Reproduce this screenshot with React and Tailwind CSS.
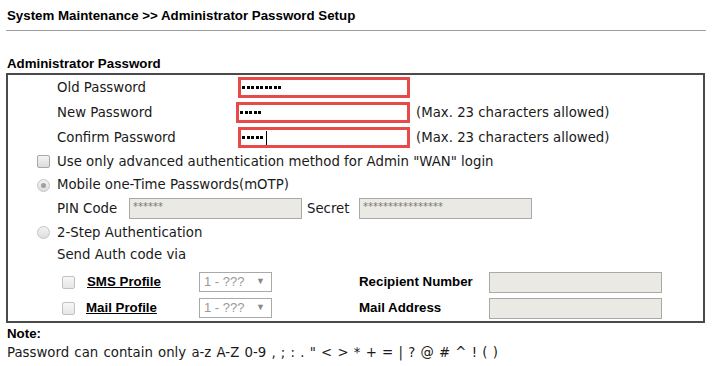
import React from 'react';

const arial = "font-['Liberation_Sans',Arial,sans-serif]";
const verdana = "font-['DejaVu_Sans',Verdana,sans-serif]";

const Check = ({ className = '' }) => (
  <span className={`inline-block h-[13px] w-[13px] rounded-[2px] border border-[#a8a8a8] bg-gradient-to-b from-[#f4f4f4] to-[#dcdcdc] ${className}`} />
);

const Radio = ({ checked }) => (
  <span className="inline-flex h-[13px] w-[13px] items-center justify-center rounded-full border border-[#c4c4c4] bg-gradient-to-b from-[#f2f2f2] to-[#dedede]">
    {checked && <span className="h-[5px] w-[5px] rounded-full bg-[#a0a0a0]" />}
  </span>
);

const RedInput = ({ dots, caret, className = '' }) => (
  <div className={`flex h-[21px] w-[172px] items-center gap-[1.5px] border-[3px] border-[#e84a4a] bg-white pl-[1px] ${className}`}>
    {Array.from({ length: dots }).map((_, i) => (
      <span key={i} className="h-[3px] w-[3px] bg-black" />
    ))}
    {caret && <span className="ml-[1px] h-[14px] w-px bg-black" />}
  </div>
);

const GrayInput = ({ text }) => (
  <div className="flex h-[21px] w-[173px] items-start border border-[#a9a9a9] bg-[#ebe9e3] pl-[3px] pt-[3px]">
    <span className={`${verdana} text-[10px] leading-none text-[#777]`}>{text}</span>
  </div>
);

const Select = () => (
  <div className={`flex h-[20px] w-[73px] items-center justify-between border border-[#aaa] bg-white pl-[4px] pr-[6px] ${arial} text-[13px] text-[#999]`}>
    <span>1 - ???</span>
    <span className="text-[9px] text-[#888]">{'\u25BC'}</span>
  </div>
);

export default function App() {
  return (
    <div className="h-[366px] w-[716px] bg-white text-black">
      <div className={`${arial} px-[7px] pt-[8px] text-[13.3px] font-bold leading-[16px]`}>
        System Maintenance &gt;&gt; Administrator Password Setup
      </div>
      <div className="mx-[6px] mt-[6px] h-px w-[700px] bg-[#9c9c9c]" />

      <div className={`${arial} mt-[23px] px-[7px] text-[13.3px] font-bold leading-[19px]`}>
        Administrator Password
      </div>

      <div className={`${verdana} ml-[6px] w-[699px] border-2 border-[#4a4a4a] text-[13.3px] text-[#1a1a1a]`}>
        <div className="flex h-[25px] items-center">
          <span className="w-[230px] pl-[49px]">Old Password</span>
          <RedInput dots={9} />
        </div>
        <div className="flex h-[25px] items-center">
          <span className="w-[228px] pl-[49px]">New Password</span>
          <RedInput dots={5} className="w-[174px]" />
          <span className="ml-[6px]">(Max. 23 characters allowed)</span>
        </div>
        <div className="flex h-[25px] items-center">
          <span className="w-[230px] pl-[49px]">Confirm Password</span>
          <RedInput dots={5} caret />
          <span className="ml-[6px]">(Max. 23 characters allowed)</span>
        </div>
        <div className="flex h-[23px] items-center">
          <Check className="ml-[29px] mr-[7px]" />
          <span>Use only advanced authentication method for Admin "WAN" login</span>
        </div>
        <div className="flex h-[24px] items-center">
          <span className="ml-[29px] mr-[7px] flex"><Radio checked /></span>
          <span>Mobile one-Time Passwords(mOTP)</span>
        </div>
        <div className="flex h-[23px] items-center">
          <span className="w-[121px] pl-[49px]">PIN Code</span>
          <GrayInput text="******" />
          <span className="w-[57px] pl-[5px]">Secret</span>
          <GrayInput text="****************" />
        </div>
        <div className="flex h-[25px] items-center">
          <span className="ml-[29px] mr-[7px] flex"><Radio /></span>
          <span>2-Step Authentication</span>
        </div>
        <div className="flex h-[19px] items-center pl-[49px]">Send Auth code via</div>

        <div className="mt-[5px] flex h-[26px] items-center">
          <Check className="ml-[54px] opacity-70" />
          <span className={`${arial} ml-[12px] w-[112px] text-[13.3px] font-bold text-black underline`}>SMS Profile</span>
          <Select />
          <span className={`${arial} ml-[87px] w-[130px] text-[13.3px] font-bold text-black`}>Recipient Number</span>
          <GrayInput text="" />
        </div>
        <div className="flex h-[26px] items-center">
          <Check className="ml-[54px] opacity-70" />
          <span className={`${arial} ml-[11px] w-[113px] text-[13.3px] font-bold text-black underline`}>Mail Profile</span>
          <Select />
          <span className={`${arial} ml-[87px] w-[130px] text-[13.3px] font-bold text-black`}>Mail Address</span>
          <GrayInput text="" />
        </div>
      </div>

      <div className={`${arial} px-[7px] pt-[3px] text-[13.3px] font-bold leading-[16px]`}>Note:</div>
      <div className={`${verdana} px-[7px] pt-[2px] text-[13.3px] leading-[17px] text-[#1a1a1a] [word-spacing:1px]`}>
        Password can contain only a-z A-Z 0-9 , ; : . " &lt; &gt; * + = | ? @ # ^ ! ( )
      </div>
    </div>
  );
}
